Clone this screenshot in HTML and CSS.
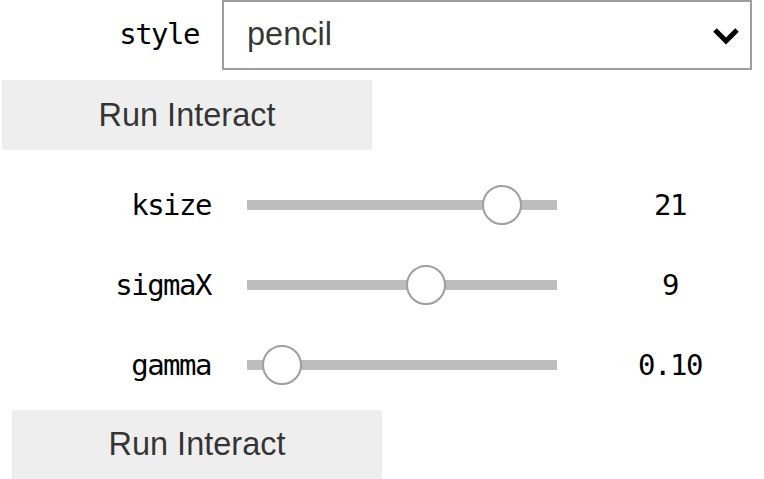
FILE: index.html
```html
<!DOCTYPE html>
<html>
<head>
<meta charset="utf-8">
<link rel="stylesheet" href="styles.css">
</head>
<body>
<div class="app">
  <div class="row-select">
    <div class="label label-select">style</div>
    <div class="select">
      <span class="select-value">pencil</span>
      <svg class="chevron" width="28" height="18" viewBox="0 0 28 18"><path d="M3 3 L14 14 L25 3" fill="none" stroke="#000" stroke-width="5"/></svg>
    </div>
  </div>
  <div class="btn btn-first">Run Interact</div>
  <div class="sliders">
    <div class="slider-row">
      <div class="label">ksize</div>
      <div class="track"><div class="thumb" style="left:235px"></div></div>
      <div class="value">21</div>
    </div>
    <div class="slider-row">
      <div class="label">sigmaX</div>
      <div class="track"><div class="thumb" style="left:159px"></div></div>
      <div class="value">9</div>
    </div>
    <div class="slider-row">
      <div class="label">gamma</div>
      <div class="track"><div class="thumb" style="left:15px"></div></div>
      <div class="value">0.10</div>
    </div>
  </div>
  <div class="btn btn-second">Run Interact</div>
</div>
</body>
</html>
```
FILE: styles.css
```css
html, body {
  margin: 0;
  padding: 0;
  background: #fff;
}
.app {
  width: 764px;
  display: flex;
  flex-direction: column;
}
.label {
  font-family: "DejaVu Sans Mono", monospace;
  font-size: 29px;
  letter-spacing: -1.5px;
  color: #000;
  text-align: right;
  flex: none;
}
.row-select {
  display: flex;
  align-items: center;
  height: 70px;
}
.label-select {
  width: 222px;
  padding-right: 23px;
  box-sizing: border-box;
  position: relative;
  top: -1px;
}
.select {
  flex: none;
  width: 530px;
  height: 70px;
  box-sizing: border-box;
  border: 2px solid #9e9e9e;
  display: flex;
  align-items: center;
  justify-content: space-between;
  padding: 0 10px 0 23px;
  font-family: "Liberation Sans", Arial, sans-serif;
  font-size: 32.5px;
  color: rgba(0, 0, 0, 0.8);
}
.select-value {
  position: relative;
  top: -1px;
}
.chevron {
  display: block;
  margin-top: 2px;
}
.btn {
  width: 370px;
  height: 70px;
  background: #eeeeee;
  display: flex;
  align-items: center;
  justify-content: center;
  font-family: "Liberation Sans", Arial, sans-serif;
  font-size: 32.5px;
  color: rgba(0, 0, 0, 0.8);
}
.btn-first {
  margin: 10px 0 0 2px;
}
.btn-second {
  margin: 5px 0 0 12px;
  height: 69px;
}
.sliders {
  margin-top: 15px;
  display: flex;
  flex-direction: column;
}
.slider-row {
  height: 80px;
  display: flex;
  align-items: center;
}
.slider-row .label {
  width: 211px;
}
.track {
  flex: none;
  margin-left: 36px;
  width: 310px;
  height: 10px;
  background: #bdbdbd;
  position: relative;
}
.thumb {
  position: absolute;
  top: -15px;
  width: 40px;
  height: 40px;
  box-sizing: border-box;
  border: 2px solid #9e9e9e;
  border-radius: 50%;
  background: #fff;
}
.value {
  flex: none;
  margin-left: 23px;
  width: 180px;
  text-align: center;
  font-family: "DejaVu Sans Mono", monospace;
  font-size: 29px;
  letter-spacing: -1.5px;
  color: #000;
}
```
